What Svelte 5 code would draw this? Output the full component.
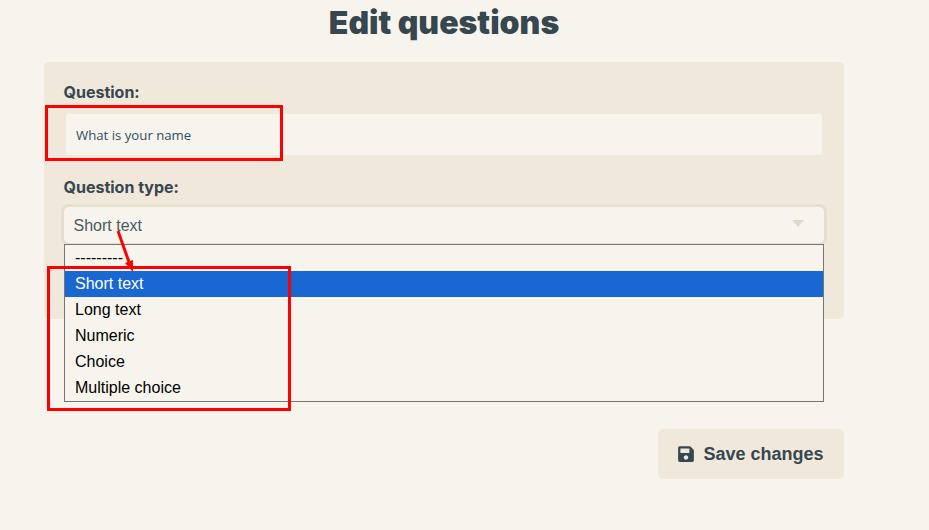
<script lang="ts">
	const options = ['---------', 'Short text', 'Long text', 'Numeric', 'Choice', 'Multiple choice'];
	let selected = $state('Short text');
	let question = $state('What is your name');
</script>

<main class="page">
	<h1>Edit questions</h1>

	<form class="card" onsubmit={(e) => e.preventDefault()}>
		<label class="field">
			<span class="label">Question:</span>
			<input class="text-input" bind:value={question} />
		</label>

		<div class="field type-field">
			<span class="label">Question type:</span>
			<div class="select">
				<span class="select-value">{selected}</span>
				<i class="caret"></i>
			</div>
			<ul class="dropdown">
				{#each options as option}
					<li class:active={option === selected}>{option}</li>
				{/each}
			</ul>
		</div>
	</form>

	<div class="actions">
		<button type="button" class="save-btn">
			<svg viewBox="0 0 448 512" width="16" height="18" aria-hidden="true">
				<path
					fill="currentColor"
					d="M433.941 129.941l-83.882-83.882A48 48 0 0 0 316.118 32H48C21.490 32 0 53.490 0 80v352c0 26.510 21.490 48 48 48h352c26.510 0 48-21.490 48-48V163.882a48 48 0 0 0-14.059-33.941zM224 416c-35.346 0-64-28.654-64-64 0-35.346 28.654-64 64-64s64 28.654 64 64c0 35.346-28.654 64-64 64zm96-304.520V212c0 6.627-5.373 12-12 12H76c-6.627 0-12-5.373-12-12V108c0-6.627 5.373-12 12-12h228.520c3.183 0 6.235 1.264 8.485 3.515l3.480 3.480A12.002 12.002 0 0 1 320 111.480z"
				/>
			</svg>
			Save changes
		</button>
	</div>

	<!-- red annotations drawn on top of the screenshot -->
	<div class="mark mark-question"></div>
	<div class="mark mark-options"></div>
	<svg class="arrow" width="40" height="50" viewBox="0 0 40 50" aria-hidden="true">
		<line x1="9" y1="2" x2="20" y2="33" stroke="#f00" stroke-width="3" />
		<polygon points="24,43 16,34 24,31" fill="#f00" />
	</svg>
</main>

<style>
	:global(body) {
		margin: 0;
		background: #f7f4ed;
	}

	.page {
		position: relative;
		width: 800px;
		height: 530px;
		margin-left: 44px;
		overflow: hidden;
		font-family: Inter, 'Liberation Sans', sans-serif;
		color: #37474f;
	}

	h1 {
		margin: 0;
		padding-top: 3px;
		height: 62px;
		box-sizing: border-box;
		text-align: center;
		font-size: 32px;
		line-height: 39px;
		font-weight: 900;
	}

	/* Card */
	.card {
		height: 257px;
		box-sizing: border-box;
		padding: 20px 20px 20px 19.500px;
		background: #efe8db;
		border-radius: 5px;
	}

	.field {
		display: block;
	}

	.label {
		display: block;
		font-size: 16px;
		line-height: 20px;
		font-weight: 700;
	}

	.text-input {
		display: block;
		width: 756px;
		height: 41px;
		box-sizing: border-box;
		margin: 12px 0 0 2.500px;
		padding: 0 10px;
		border: 0;
		border-radius: 3px;
		background: #f7f4ed;
		font-family: 'Open Sans', sans-serif;
		font-size: 13.200px;
		color: #2f4f63;
		outline: none;
	}

	.type-field {
		position: relative;
		margin-top: 22px;
	}

	/* Select */
	.select {
		display: flex;
		align-items: center;
		justify-content: space-between;
		width: 766px;
		height: 42px;
		box-sizing: border-box;
		margin: 7px 0 0 -2.500px;
		padding: 0 20px 0 9.500px;
		border: 3px solid #e6dfcd;
		border-radius: 8px;
		background: #f7f4ed;
		font-family: 'Liberation Sans', sans-serif;
		font-size: 16px;
		color: #4a5a62;
	}

	.select-value {
		padding-top: 2px;
	}

	.caret {
		width: 0;
		height: 0;
		margin-bottom: 4px;
		border-left: 6px solid transparent;
		border-right: 6px solid transparent;
		border-top: 7px solid #e0d9c7;
	}

	/* Open list sits over the card */
	.dropdown {
		position: absolute;
		top: 67px;
		left: 0.500px;
		width: 760px;
		height: 158px;
		box-sizing: border-box;
		margin: 0;
		padding: 0;
		list-style: none;
		border: 1px solid #767676;
		background: #f7f4ed;
		font-family: 'Liberation Sans', sans-serif;
		font-size: 16px;
		color: #000;
	}

	.dropdown li {
		height: 26px;
		padding: 0 10px;
		line-height: 26px;
	}

	.dropdown li.active {
		background: #1967d2;
		color: #fff;
	}

	/* Save button */
	.actions {
		display: flex;
		justify-content: flex-end;
		margin-top: 110px;
	}

	.save-btn {
		display: flex;
		align-items: center;
		gap: 9.500px;
		height: 50px;
		padding: 0 20.500px 0 20px;
		border: 0;
		border-radius: 5px;
		background: #efe8db;
		font-family: 'Liberation Sans', sans-serif;
		font-size: 18px;
		font-weight: 700;
		color: #37474f;
	}

	/* Annotations */
	.mark {
		position: absolute;
		box-sizing: border-box;
		border: 3px solid #f00;
	}

	.mark-question {
		left: 1px;
		top: 105px;
		width: 238px;
		height: 56px;
	}

	.mark-options {
		left: 3px;
		top: 266px;
		width: 244px;
		height: 145px;
	}

	.arrow {
		position: absolute;
		left: 65px;
		top: 229px;
	}
</style>
